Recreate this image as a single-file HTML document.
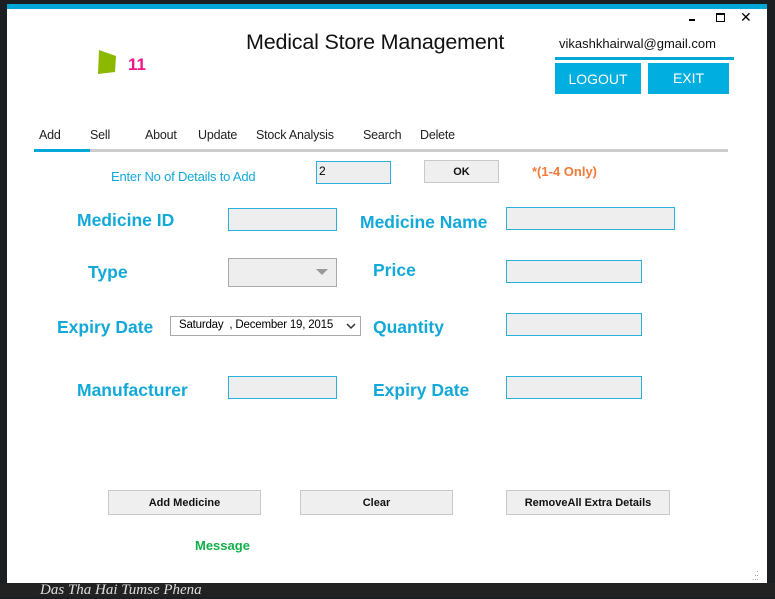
<!DOCTYPE html>
<html><head><meta charset="utf-8"><style>
*{margin:0;padding:0;box-sizing:border-box}
body{width:775px;height:597px;overflow:hidden;background:#1c1f22;font-family:"Liberation Sans",sans-serif;position:relative}
.a{position:absolute;white-space:nowrap}
#win{position:absolute;left:7px;top:4px;width:760px;height:579px;background:#fff;border-top:5px solid #00a8d8}
.lbl{position:absolute;color:#12a9d9;font-weight:bold;font-size:17.5px;white-space:nowrap}
.box{position:absolute;background:#eee;border:1px solid #2bb0dc}
.btn{position:absolute;background:#efefef;border:1px solid #c9c9c9;font-size:11px;font-weight:bold;text-align:center;color:#111}
.tab{position:absolute;top:128px;font-size:12.5px;color:#222;letter-spacing:-0.2px}
</style></head><body>
<div class="a" style="left:0;top:583px;width:775px;height:14px;background:#222"></div>
<div class="a" style="left:40px;top:582px;color:#ddd;font-size:15px;font-style:italic;font-family:'Liberation Serif',serif">Das Tha Hai Tumse Phena</div>
<div id="win"></div>
<div class="a" style="left:689px;top:19px;width:6px;height:2px;background:#000"></div>
<div class="a" style="left:716px;top:13px;width:9px;height:9px;border:1.5px solid #000;border-top-width:2px"></div>
<div class="a" style="left:740px;top:9px;font-size:14px;color:#000">✕</div>
<svg class="a" style="left:97px;top:49px" width="24" height="26"><path d="M2 1 L19 7 L18 23 L1 25 Z" fill="#8cb800"/></svg>
<div class="a" style="left:128px;top:55px;color:#f0148c;font-weight:bold;font-size:17px">11</div>
<div class="a" style="left:246px;top:30px;font-size:21.5px;color:#111;letter-spacing:-0.2px">Medical Store Management</div>
<div class="a" style="left:559px;top:36px;font-size:13px;color:#111">vikashkhairwal@gmail.com</div>
<div class="a" style="left:555px;top:57px;width:179px;height:3px;background:#00a8d8"></div>
<div class="a" style="left:555px;top:63px;width:86px;height:31px;background:#00aee0;color:#fff;font-size:14px;text-align:center;line-height:33px">LOGOUT</div>
<div class="a" style="left:648px;top:63px;width:81px;height:31px;background:#00aee0;color:#fff;font-size:14px;text-align:center;line-height:31px">EXIT</div>
<div class="tab" style="left:39px">Add</div>
<div class="tab" style="left:90px">Sell</div>
<div class="tab" style="left:145px">About</div>
<div class="tab" style="left:198px">Update</div>
<div class="tab" style="left:256px">Stock Analysis</div>
<div class="tab" style="left:363px">Search</div>
<div class="tab" style="left:420px">Delete</div>
<div class="a" style="left:34px;top:149px;width:694px;height:3px;background:#ccc"></div>
<div class="a" style="left:34px;top:149px;width:56px;height:3px;background:#00a8d8"></div>
<div class="a" style="left:111px;top:169px;font-size:13px;color:#12a9d9;letter-spacing:-0.2px">Enter No of Details  to Add</div>
<div class="box" style="left:316px;top:161px;width:75px;height:23px;font-size:12px;padding:2px 2px">2</div>
<div class="btn" style="left:424px;top:160px;width:75px;height:23px;line-height:22px">OK</div>
<div class="a" style="left:532px;top:164px;color:#f07a3a;font-weight:bold;font-size:13px">*(1-4 Only)</div>
<div class="lbl" style="left:77px;top:210px">Medicine ID</div>
<div class="box" style="left:228px;top:208px;width:109px;height:23px"></div>
<div class="lbl" style="left:360px;top:212px">Medicine Name</div>
<div class="box" style="left:506px;top:207px;width:169px;height:23px"></div>
<div class="lbl" style="left:88px;top:262px">Type</div>
<div class="a" style="left:228px;top:258px;width:109px;height:29px;background:#eee;border:1px solid #aaa"></div>
<svg class="a" style="left:315px;top:268px" width="14" height="8"><path d="M1 1 L13 1 L7 7 Z" fill="#999"/></svg>
<div class="lbl" style="left:373px;top:260px">Price</div>
<div class="box" style="left:506px;top:260px;width:136px;height:23px"></div>
<div class="lbl" style="left:57px;top:317px">Expiry Date</div>
<div class="a" style="left:170px;top:316px;width:191px;height:20px;border:1px solid #aaa;background:#fff;font-size:11.5px;padding:2px 8px;letter-spacing:-0.2px">Saturday &nbsp;, December 19, 2015</div>
<svg class="a" style="left:346px;top:322px" width="10" height="8"><path d="M1 2 L5 6 L9 2" fill="none" stroke="#333" stroke-width="1.5"/></svg>
<div class="lbl" style="left:373px;top:317px">Quantity</div>
<div class="box" style="left:506px;top:313px;width:136px;height:23px"></div>
<div class="lbl" style="left:77px;top:380px">Manufacturer</div>
<div class="box" style="left:228px;top:376px;width:109px;height:23px"></div>
<div class="lbl" style="left:373px;top:380px">Expiry Date</div>
<div class="box" style="left:506px;top:376px;width:136px;height:23px"></div>
<div class="btn" style="left:108px;top:490px;width:153px;height:25px;line-height:25px">Add Medicine</div>
<div class="btn" style="left:300px;top:490px;width:153px;height:25px;line-height:25px">Clear</div>
<div class="btn" style="left:506px;top:490px;width:164px;height:25px;line-height:25px">RemoveAll Extra Details</div>
<div class="a" style="left:195px;top:538px;color:#12b04a;font-weight:bold;font-size:13px">Message</div>
<div class="a" style="left:752px;top:568px;font-size:8px;color:#777;line-height:4px">&nbsp;&nbsp;.<br>&nbsp;..<br>...</div>
</body></html>
